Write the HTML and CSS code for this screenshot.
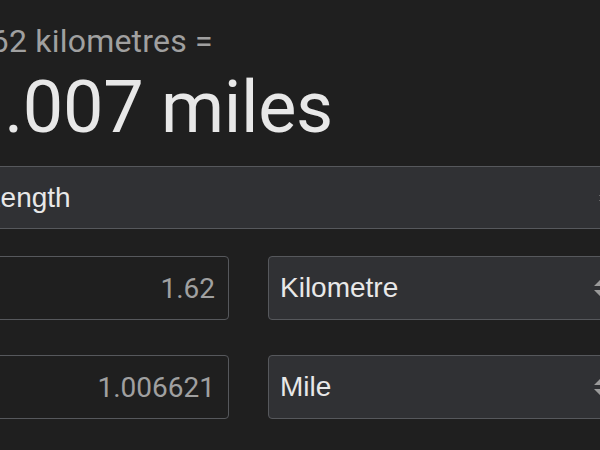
FILE: index.html
```html
<!DOCTYPE html>
<html lang="en">
<head>
  <meta charset="UTF-8">
  <meta name="viewport" content="width=device-width, initial-scale=1.0">
  <title>Unit converter</title>
  <link rel="stylesheet" href="styles.css">
</head>
<body>
  <div class="converter">
    <div class="result">
      <div class="equation">1.62 kilometres =</div>
      <div class="answer">1.007 miles</div>
    </div>

    <div class="controls">
      <div class="field select wide">
        <span>Length</span>
        <svg class="arrows" width="16" height="24" viewBox="0 0 16 24"><path d="M0 10 L8 2 L16 10 Z M0 14 L8 22 L16 14 Z" fill="#9a9a9a"/></svg>
      </div>

      <div class="row">
        <div class="field value">1.62</div>
        <div class="field select">
          <span>Kilometre</span>
          <svg class="arrows" width="16" height="24" viewBox="0 0 16 24"><path d="M0 10 L8 2 L16 10 Z M0 14 L8 22 L16 14 Z" fill="#9a9a9a"/></svg>
        </div>
      </div>

      <div class="row">
        <div class="field value">1.006621</div>
        <div class="field select">
          <span>Mile</span>
          <svg class="arrows" width="16" height="24" viewBox="0 0 16 24"><path d="M0 10 L8 2 L16 10 Z M0 14 L8 22 L16 14 Z" fill="#9a9a9a"/></svg>
        </div>
      </div>
    </div>
  </div>
</body>
</html>
```
FILE: styles.css
```css
* {
  margin: 0;
  padding: 0;
  box-sizing: border-box;
}
body {
  background: #1f1f1f;
  overflow: hidden;
  font-family: Roboto, 'Liberation Sans', sans-serif;
}
.converter {
  margin-left: -36px;
  width: 660px;
  padding-top: 23px;
}
.equation {
  font-size: 32px;
  line-height: 36px;
  letter-spacing: 0.2px;
  color: #a0a0a0;
}
.answer {
  margin-top: 9px;
  font-size: 72px;
  line-height: 80px;
  letter-spacing: -0.3px;
  color: #e8e8e8;
}
.controls {
  padding-left: 9px;
  margin-top: 18px;
  width: 652px;
  display: flex;
  flex-direction: column;
  gap: 27px;
}
.row {
  display: flex;
  gap: 39px;
}
.row + .row {
  margin-top: 8px;
}
.field {
  height: 64px;
  border: 1px solid #56585c;
  border-radius: 4px;
  display: flex;
  align-items: center;
}
.select {
  background: #303134;
  flex: 1;
  padding: 0 5px 0 11px;
  font-family: 'Liberation Sans', Arial, sans-serif;
  font-size: 28px;
  color: #e8e8e8;
}
.select.wide {
  flex: none;
  height: 63px;
  padding-right: 0;
}
.select span {
  flex: 1;
}
.value {
  width: 256px;
  justify-content: flex-end;
  padding-right: 13px;
  font-size: 28px;
  color: #a0a0a0;
}
```
